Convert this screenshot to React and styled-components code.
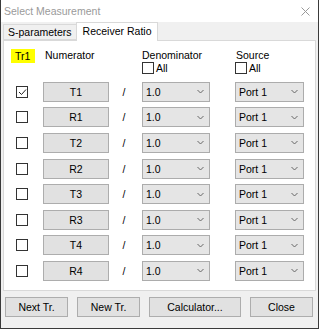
import React from "react";
import styled, { createGlobalStyle } from "styled-components";

const GlobalStyle = createGlobalStyle`
   body {
      margin: 0;
      font-family: "Liberation Sans", Arial, sans-serif;
      font-size: 10.5px;
      color: #000;
   }
`;

const Window = styled.div`
   width: 319px;
   height: 329px;
   box-sizing: border-box;
   border: 1px solid #3a3a3a;
   border-top: none;
   background: #f0f0f0;
   display: flex;
   flex-direction: column;
`;

const TitleBar = styled.div`
   height: 22px;
   background: #fff;
   display: flex;
   align-items: center;
   justify-content: space-between;
   padding: 0 8px 0 3px;
   color: #9a9a9a;
   font-size: 10.5px;
`;

const TabStrip = styled.div`
   height: 18px;
   display: flex;
   align-items: flex-end;
   padding-left: 2px;
`;

const Tab = styled.div`
   box-sizing: border-box;
   height: ${(p) => (p.$active ? "19px" : "16px")};
   margin-bottom: ${(p) => (p.$active ? "-1px" : "0")};
   padding: ${(p) => (p.$active ? "2px 6px 0 6px" : "1px 4px 0 4px")};
   background: ${(p) => (p.$active ? "#fff" : "#f0f0f0")};
   border: 1px solid #d9d9d9;
   border-bottom: ${(p) => (p.$active ? "none" : "1px solid #d9d9d9")};
   margin-left: ${(p) => (p.$active ? "-1px" : "0")};
   position: relative;
   z-index: ${(p) => (p.$active ? 1 : 0)};
   white-space: nowrap;
`;

const Panel = styled.div`
   box-sizing: border-box;
   height: 251px;
   margin: 0 2px 0 2px;
   background: #fff;
   border: 1px solid #d9d9d9;
   padding: 8px 0 0 1px;
`;

const Grid = styled.div`
   display: grid;
   grid-template-columns: 38px 66px 33px 93px 69px;
   align-items: center;
`;

const HeaderGrid = styled(Grid)`
   grid-template-rows: 13px 13px;
   align-items: start;
   margin-bottom: 4px;
`;

const TrLabel = styled.span`
   justify-self: start;
   margin-left: 6px;
   background: #ffff00;
   padding: 1px 5px 1px 4px;
   line-height: 12px;
`;

const ColTitle = styled.span`
   padding-left: ${(p) => p.$pad || 0}px;
   line-height: 12px;
`;

const AllLabel = styled.label`
   display: flex;
   align-items: center;
   gap: 2px;
   line-height: 12px;
`;

const Row = styled(Grid)`
   height: 25.6px;
`;

const Box = styled.span`
   box-sizing: border-box;
   width: 12px;
   height: 12px;
   border: 1px solid #333;
   background: #fff;
   display: inline-flex;
   align-items: center;
   justify-content: center;
   justify-self: ${(p) => (p.$row ? "start" : "auto")};
   margin-left: ${(p) => (p.$row ? "11px" : "0")};
`;

const GrayButton = styled.div`
   box-sizing: border-box;
   height: 20px;
   width: ${(p) => p.$w || 66}px;
   background: #e1e1e1;
   border: 1px solid #adadad;
   display: flex;
   align-items: center;
   justify-content: center;
`;

const Slash = styled.span`
   text-align: center;
   padding-right: 3px;
`;

const Combo = styled.div`
   box-sizing: border-box;
   height: 20px;
   width: ${(p) => p.$w}px;
   background: #e5e5e5;
   border: 1px solid #acacac;
   display: flex;
   align-items: center;
   justify-content: space-between;
   padding: 0 5px 0 3px;
`;

const Footer = styled.div`
   flex: 1;
   display: flex;
   justify-content: space-between;
   align-items: flex-start;
   padding: 6px 5px 0 4px;
`;

function Check({ checked, row }) {
   return (
      <Box $row={row}>
         {checked && (
            <svg width="9" height="8" viewBox="0 0 9 8">
               <path d="M1 4 L3.5 6.5 L8 1.5" fill="none" stroke="#222" strokeWidth="1" />
            </svg>
         )}
      </Box>
   );
}

function Chevron() {
   return (
      <svg width="7" height="5" viewBox="0 0 7 5">
         <path d="M0.5 1 L3.5 4 L6.5 1" fill="none" stroke="#666" strokeWidth="1" />
      </svg>
   );
}

const channels = ["T1", "R1", "T2", "R2", "T3", "R3", "T4", "R4"];

export default function App() {
   return (
      <Window>
         <GlobalStyle />
         <TitleBar>
            <span>Select Measurement</span>
            <svg width="9" height="9" viewBox="0 0 9 9">
               <path d="M0.5 0.5 L8.5 8.5 M8.5 0.5 L0.5 8.5" stroke="#999" strokeWidth="1" />
            </svg>
         </TitleBar>
         <TabStrip>
            <Tab>S-parameters</Tab>
            <Tab $active>Receiver Ratio</Tab>
         </TabStrip>
         <Panel>
            <HeaderGrid>
               <TrLabel>Tr1</TrLabel>
               <ColTitle $pad={2}>Numerator</ColTitle>
               <span />
               <ColTitle>Denominator</ColTitle>
               <ColTitle $pad={1}>Source</ColTitle>
               <span />
               <span />
               <span />
               <AllLabel>
                  <Check />
                  All
               </AllLabel>
               <AllLabel>
                  <Check />
                  All
               </AllLabel>
            </HeaderGrid>
            {channels.map((ch, index) => (
               <Row key={ch}>
                  <Check row checked={index === 0} />
                  <GrayButton>{ch}</GrayButton>
                  <Slash>/</Slash>
                  <Combo $w={68}>
                     <span>1.0</span>
                     <Chevron />
                  </Combo>
                  <Combo $w={69}>
                     <span>Port 1</span>
                     <Chevron />
                  </Combo>
               </Row>
            ))}
         </Panel>
         <Footer>
            <GrayButton $w={63}>Next Tr.</GrayButton>
            <GrayButton $w={63}>New Tr.</GrayButton>
            <GrayButton $w={92}>Calculator...</GrayButton>
            <GrayButton $w={63}>Close</GrayButton>
         </Footer>
      </Window>
   );
}
